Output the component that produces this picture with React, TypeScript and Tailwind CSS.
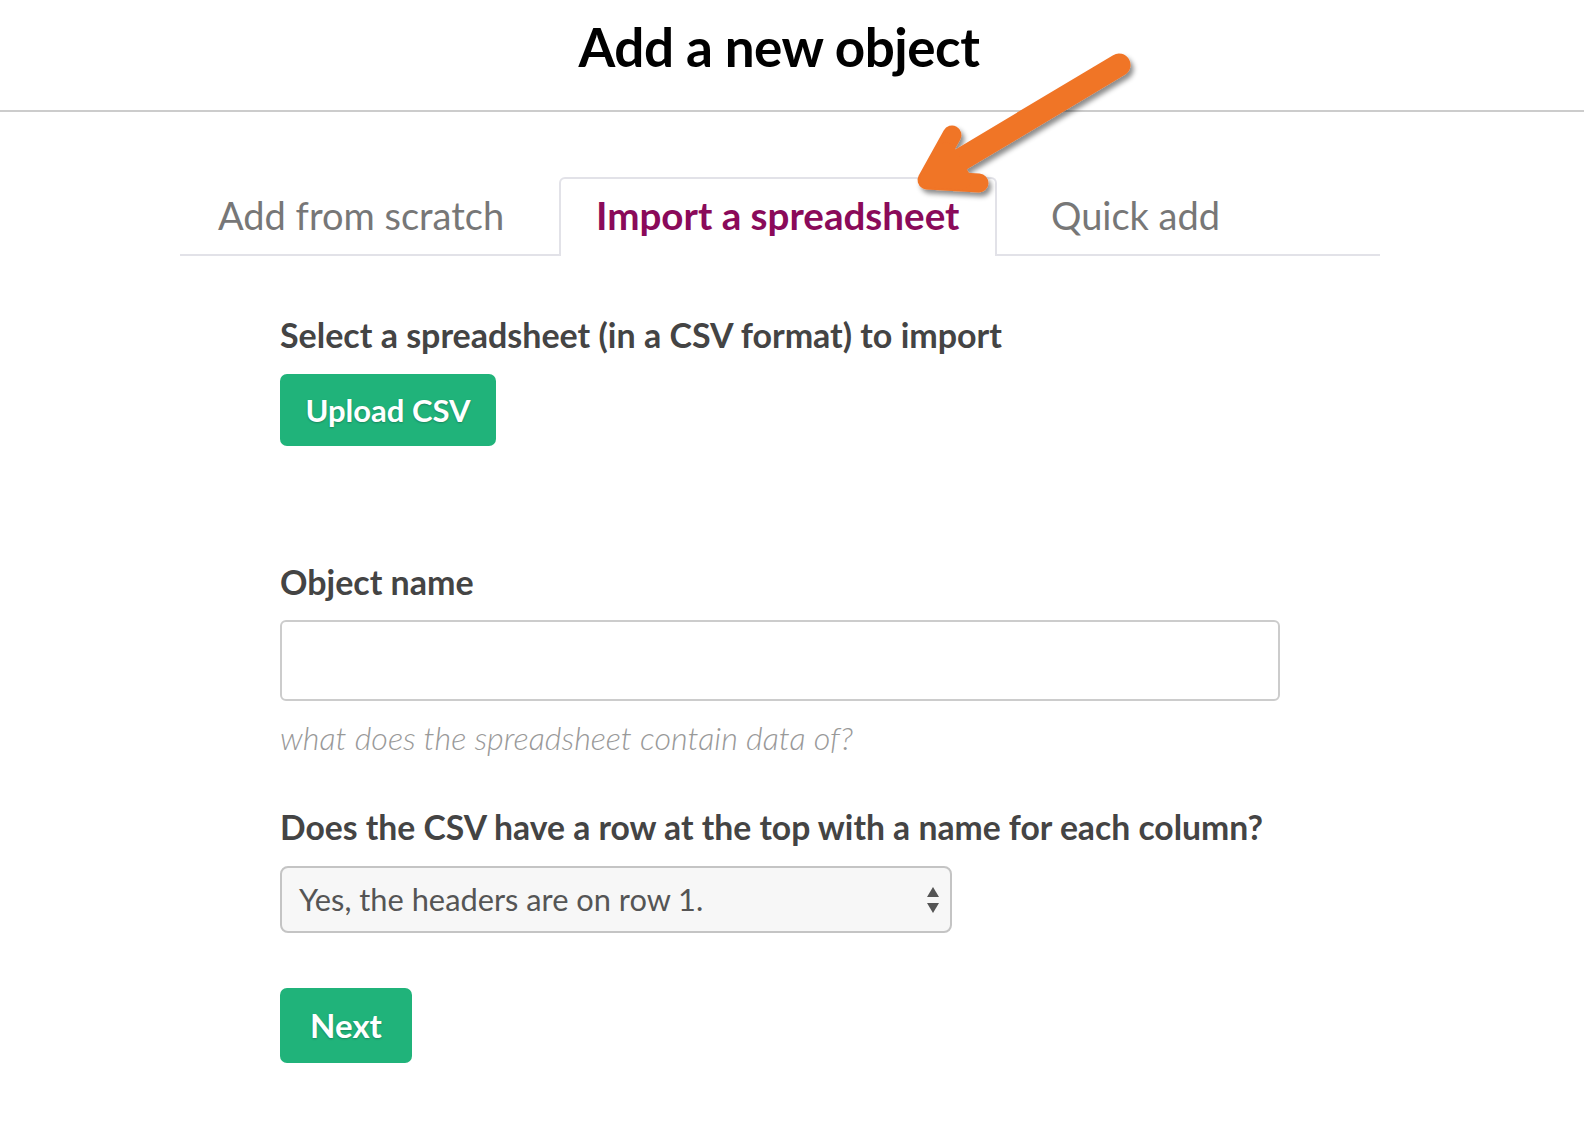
import React from "react";

export default function App() {
  return (
    <div className="relative min-h-[1144px] w-full bg-white font-['Lato',sans-serif] text-[#444]">
      <div className="h-[112px] border-b-2 border-[#cccccc]">
        <div className="w-[1558px] flex justify-center pt-[15px]">
          <h1 className="font-['Lato',sans-serif] font-bold text-[53px] leading-[64px] text-black tracking-[-0.5px]">
            Add a new object
          </h1>
        </div>
      </div>

      <div className="ml-[180px] mt-[65px] w-[1200px] flex border-b-2 border-[#e2e2e8]">
        <div className="w-[379px] h-[77px] pl-[38px] pt-[13px] text-[38px] leading-[50px] text-[#777]">
          Add from scratch
        </div>
        <div className="w-[438px] h-[79px] -mb-[2px] bg-white border-2 border-b-0 border-[#e2e2e8] rounded-t-[6px] pl-[35px] pt-[11px] text-[38.6px] leading-[50px] font-bold text-[#8a0a5a]">
          Import a spreadsheet
        </div>
        <div className="flex-1 h-[77px] pl-[54px] pt-[13px] text-[38px] leading-[50px] text-[#777]">
          Quick add
        </div>
      </div>

      <div className="ml-[280px] w-[1000px] pt-[59px]">
        <div className="text-[34px] leading-[40px] font-bold text-[#444]">
          Select a spreadsheet (in a CSV format) to import
        </div>
        <button className="mt-[19px] w-[216px] h-[72px] rounded-[7px] bg-[#20b37a] text-white text-[31px] font-bold [text-shadow:0_1px_2px_rgba(0,0,0,0.25)]">
          Upload CSV
        </button>

        <div className="mt-[116px] text-[34px] leading-[40px] font-bold text-[#444]">
          Object name
        </div>
        <div className="mt-[18px] w-[1000px] h-[81px] rounded-[6px] border-2 border-[#cccccc] bg-white" />
        <div className="mt-[17px] text-[32.3px] leading-[40px] italic font-light text-[#999]">
          what does the spreadsheet contain data of?
        </div>

        <div className="mt-[49px] text-[33.7px] leading-[40px] font-bold text-[#444]">
          Does the CSV have a row at the top with a name for each column?
        </div>
        <div className="mt-[19px] w-[672px] h-[67px] rounded-[8px] border-2 border-[#c4c4c4] bg-[#f7f7f7] flex items-center justify-between pl-[17px] pr-[9px]">
          <span className="text-[30.8px] leading-[40px] text-[#555]">Yes, the headers are on row 1.</span>
          <svg width="16" height="30" viewBox="0 0 16 30">
            <path d="M8 2 L14 12 L2 12 Z" fill="#555" />
            <path d="M2 18 L14 18 L8 28 Z" fill="#555" />
          </svg>
        </div>

        <button className="mt-[55px] w-[132px] h-[75px] rounded-[7px] bg-[#20b37a] text-white text-[33px] font-bold [text-shadow:0_1px_2px_rgba(0,0,0,0.25)]">
          Next
        </button>
      </div>

      <svg
        className="absolute top-0 left-0 pointer-events-none"
        width="1584"
        height="1144"
        viewBox="0 0 1584 1144"
      >
        <defs>
          <filter id="sh" x="-20%" y="-20%" width="140%" height="140%">
            <feDropShadow dx="3" dy="4" stdDeviation="2.5" floodColor="#000" floodOpacity="0.45" />
          </filter>
        </defs>
        <g filter="url(#sh)" stroke="#f07427" strokeLinecap="round" strokeLinejoin="round" fill="none">
          <path d="M1119 65 L940 172" strokeWidth="23" />
          <path d="M952 135 L927 180 L979 183" strokeWidth="19" />
          <path d="M946 152 L930 178 L962 180 Z" fill="#f07427" strokeWidth="19" />
        </g>
      </svg>
    </div>
  );
}
